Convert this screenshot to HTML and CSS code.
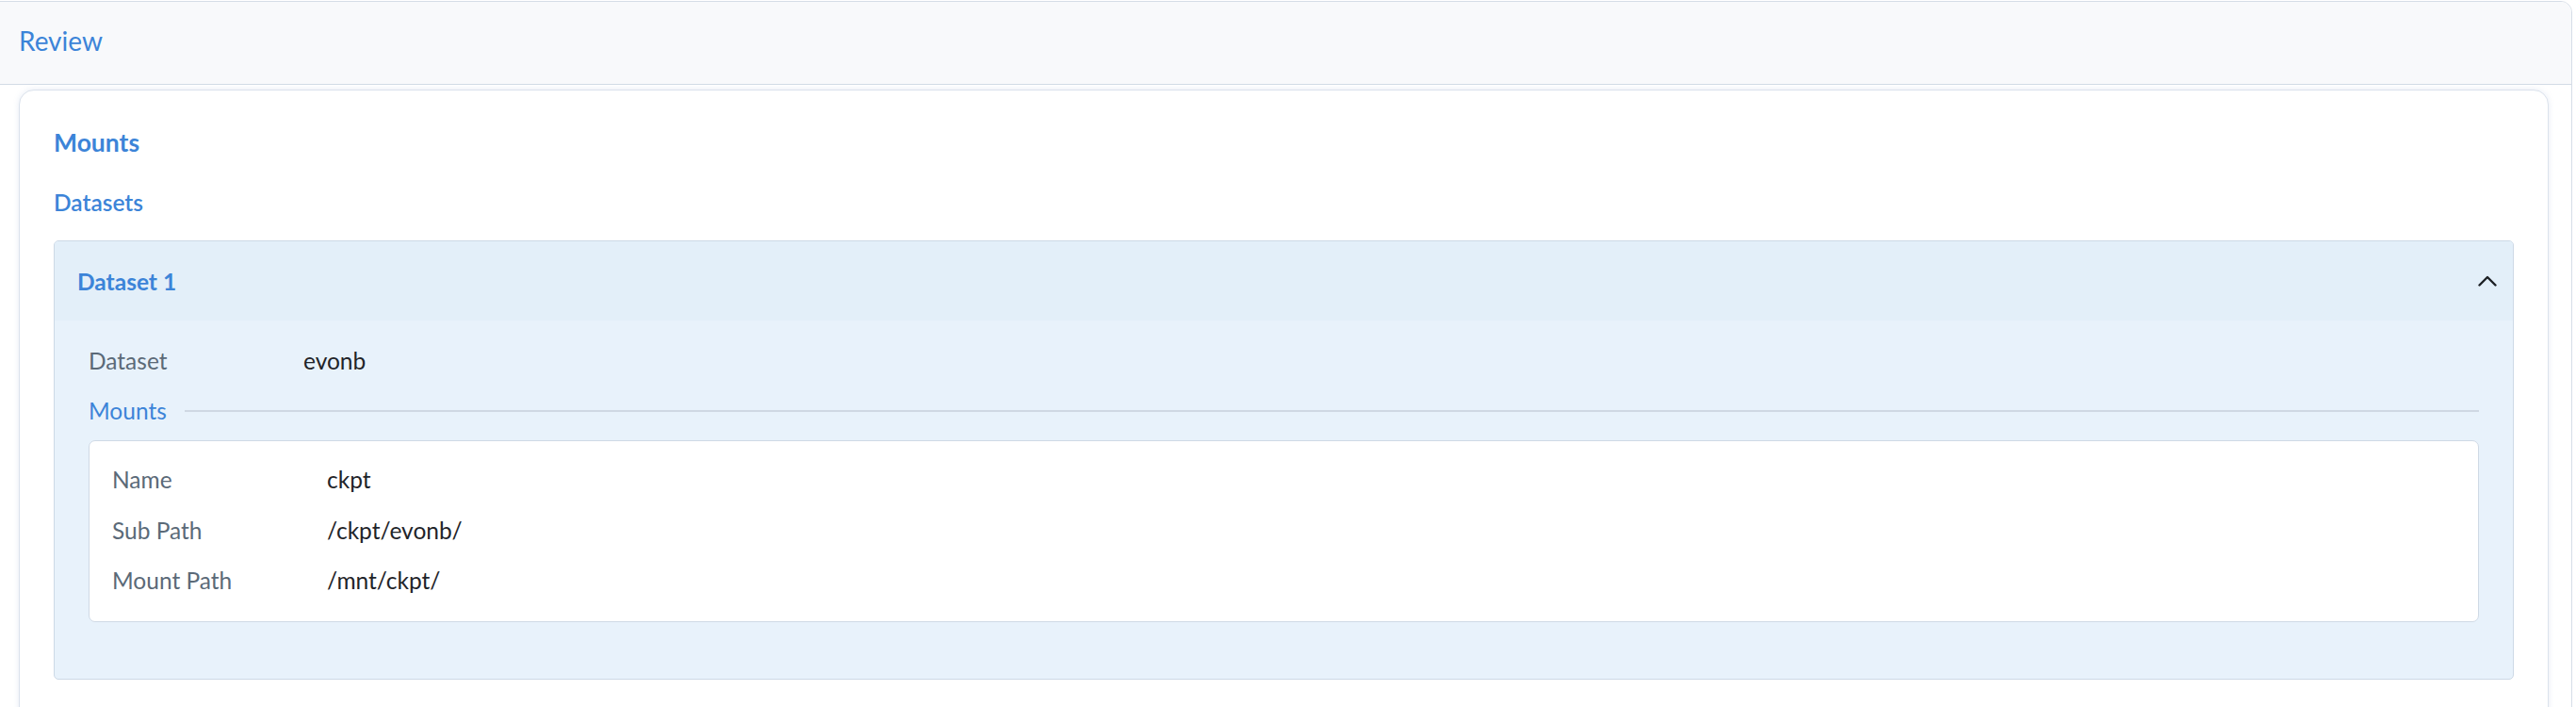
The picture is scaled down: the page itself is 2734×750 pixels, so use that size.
FILE: index.html
```html
<!DOCTYPE html>
<html lang="en">
<head>
<meta charset="utf-8">
<title>Review</title>
<link rel="stylesheet" href="styles.css">
</head>
<body>
<div class="frame">
  <div class="frame-header">Review</div>
  <div class="card">
    <h2 class="section-title">Mounts</h2>
    <h3 class="subsection-title">Datasets</h3>
    <div class="panel">
      <div class="panel-header">
        <span class="panel-title">Dataset 1</span>
        <svg class="chevron" width="20" height="12" viewBox="0 0 20 12" aria-hidden="true">
          <path d="M1.5 10.5 L10 2 L18.5 10.5" fill="none" stroke="#1d2125" stroke-width="2.4" stroke-linecap="round" stroke-linejoin="round"/>
        </svg>
      </div>
      <div class="panel-body">
        <div class="kv">
          <span class="kv-label">Dataset</span>
          <span class="kv-value">evonb</span>
        </div>
        <div class="divider">
          <span class="divider-label">Mounts</span>
          <span class="divider-line"></span>
        </div>
        <div class="mount-box">
          <div class="kv">
            <span class="kv-label">Name</span>
            <span class="kv-value">ckpt</span>
          </div>
          <div class="kv">
            <span class="kv-label">Sub Path</span>
            <span class="kv-value">/ckpt/evonb/</span>
          </div>
          <div class="kv">
            <span class="kv-label">Mount Path</span>
            <span class="kv-value">/mnt/ckpt/</span>
          </div>
        </div>
      </div>
    </div>
  </div>
</div>
</body>
</html>
```
FILE: styles.css
```css
html, body {
  margin: 0;
  padding: 0;
  overflow: hidden;
  background: #ffffff;
}

body {
  padding-top: 1px;
  font-family: "Lato", "Open Sans", sans-serif;
  color: #1f2429;
}

.frame {
  margin: 0 4px 0 -1px;
  border: 1px solid #d6dde7;
  border-radius: 0 12px 0 0;
  background: #ffffff;
  min-height: 900px;
}

.frame-header {
  background: #f8f9fb;
  border-bottom: 1px solid #d3dbe6;
  border-radius: 0 11px 0 0;
  padding: 21px 20px 26px 20px;
  font-size: 28px;
  line-height: 40px;
  color: #3c84d8;
}

.card {
  margin: 5px 24px 0 20px;
  border: 1px solid #dbe2ec;
  border-radius: 16px;
  box-shadow: 0 0 6px rgba(120, 150, 200, 0.18);
  padding: 37px 36px 60px 36px;
  background: #ffffff;
}

.section-title {
  margin: 0;
  font-size: 26.5px;
  line-height: 36px;
  font-weight: 700;
  color: #3c84d8;
}

.subsection-title {
  margin: 29px 0 0 0;
  font-size: 24.5px;
  line-height: 34px;
  font-weight: 600;
  color: #3c84d8;
}

.panel {
  margin-top: 23px;
  border: 1px solid #cdd9e6;
  border-radius: 5px;
  background: #e8f2fb;
  overflow: hidden;
}

.panel-header {
  display: flex;
  align-items: center;
  justify-content: space-between;
  background: #e3eff9;
  padding: 26px 17px 24px 24px;
}

.panel-title {
  font-size: 24.5px;
  line-height: 34px;
  font-weight: 700;
  color: #3c84d8;
}

.chevron {
  display: block;
  margin-top: -3px;
}

.panel-body {
  padding: 26px 36px 60px 36px;
}

.kv {
  display: flex;
  font-size: 24.5px;
  line-height: 34px;
}

.kv-label {
  flex: 0 0 228px;
  color: #5b6a78;
}

.kv-value {
  color: #1f2429;
}

.divider {
  display: flex;
  align-items: center;
  gap: 19px;
  margin-top: 19px;
}

.divider-label {
  font-size: 24.5px;
  line-height: 34px;
  color: #3c84d8;
}

.divider-line {
  flex: 1;
  height: 2px;
  background: #cfd8e3;
  margin-top: 0;
}

.mount-box {
  margin-top: 14px;
  background: #ffffff;
  border: 1px solid #cfd9e5;
  border-radius: 7px;
  padding: 24px 24px 26px 24px;
  display: flex;
  flex-direction: column;
  gap: 19.7px;
}
```
